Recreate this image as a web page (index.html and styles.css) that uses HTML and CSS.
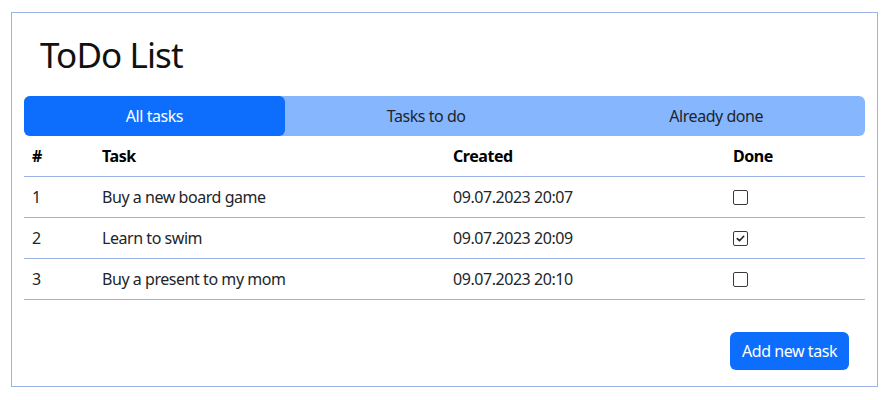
FILE: index.html
```html
<!DOCTYPE html>
<html lang="en">
<head>
<meta charset="utf-8">
<title>ToDo List</title>
<link rel="stylesheet" href="styles.css">
</head>
<body>
<div class="app">
  <h1 class="title">ToDo List</h1>
  <nav class="tabs">
    <a class="tab active">All tasks</a>
    <a class="tab">Tasks to do</a>
    <a class="tab">Already done</a>
  </nav>
  <table class="tasks">
    <thead>
      <tr><th class="c-num">#</th><th class="c-task">Task</th><th class="c-created">Created</th><th class="c-done">Done</th></tr>
    </thead>
    <tbody>
      <tr><td>1</td><td>Buy a new board game</td><td>09.07.2023 20:07</td><td><span class="check"></span></td></tr>
      <tr><td>2</td><td>Learn to swim</td><td>09.07.2023 20:09</td><td><span class="check checked"><svg viewBox="0 0 15 15" width="15" height="15"><path d="M4.3 7.6 L6.5 9.7 L10.7 5.3" fill="none" stroke="#222" stroke-width="1.6" stroke-linecap="round" stroke-linejoin="round"/></svg></span></td></tr>
      <tr><td>3</td><td>Buy a present to my mom</td><td>09.07.2023 20:10</td><td><span class="check"></span></td></tr>
    </tbody>
  </table>
  <div class="footer">
    <button class="btn-add">Add new task</button>
  </div>
</div>
</body>
</html>
```
FILE: styles.css
```css
* { box-sizing: border-box; }
body {
  margin: 0;
  font-family: "Noto Sans", "Open Sans", sans-serif;
  font-size: 16px;
  line-height: 24px;
  letter-spacing: -0.45px;
  color: #212529;
  background: #fff;
}
.app {
  width: 867px;
  margin: 12px 0 0 11px;
  border: 1px solid #9cb3e8;
  padding: 20px 12px 12px 12px;
}
.title {
  margin: 0 0 20px 0;
  padding-left: 16px;
  font-size: 35px;
  font-weight: 400;
  line-height: 43px;
  letter-spacing: -0.9px;
  color: #111;
}
.tabs {
  display: flex;
  background: #86b7fe;
  border-radius: 6px;
}
.tab {
  flex: 1 1 auto;
  text-align: center;
  padding: 8px 16px;
  color: #212529;
  border-radius: 6px;
  cursor: pointer;
}
.tab.active {
  background: #0d6efd;
  color: #fff;
}
.tasks {
  width: 100%;
  border-collapse: collapse;
}
.tasks th, .tasks td {
  text-align: left;
  padding: 8px;
  border-bottom: 1px solid #9cb3e8;
  vertical-align: middle;
}
.tasks th { font-weight: 700; color: #000; }
.c-num { width: 70px; }
.c-task { width: 351px; }
.c-created { width: 280px; }
.check {
  display: inline-block;
  width: 15px;
  height: 15px;
  border: 1px solid #3a3a3a;
  border-radius: 2px;
  vertical-align: -2px;
  position: relative;
}
.check svg { position: absolute; left: -1px; top: -1px; }
.footer {
  display: flex;
  justify-content: flex-end;
  padding: 32px 16px 4px 0;
}
.btn-add {
  font-family: inherit;
  font-size: 16px;
  line-height: 24px;
  letter-spacing: -0.45px;
  padding: 7px 12px;
  color: #fff;
  background: #0d6efd;
  border: 0;
  border-radius: 6px;
}
```
